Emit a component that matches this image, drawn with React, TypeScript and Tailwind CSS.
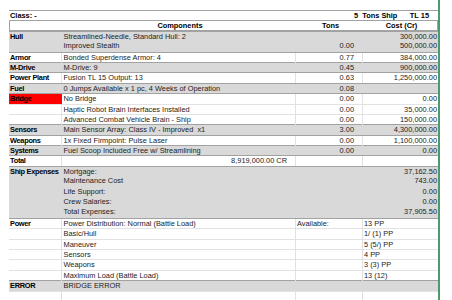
import React from "react";
import clsx from "clsx";

type Row = {
    label?: string;
    text?: string;
    tons?: string;
    cost?: string;
    avail?: string;
    pp?: string;
    total?: string;
    gray?: boolean;
    top?: boolean;
    red?: boolean;
};

const rows: Row[] = [
    { label: "Hull", text: "Streamlined-Needle, Standard Hull: 2", cost: "300,000.00", gray: true, top: true },
    { text: "Improved Stealth", tons: "0.00", cost: "500,000.00", gray: true },
    { label: "Armor", text: "Bonded Superdense Armor: 4", tons: "0.77", cost: "384,000.00", top: true },
    { label: "M-Drive", text: "M-Drive: 9", tons: "0.45", cost: "900,000.00", gray: true, top: true },
    { label: "Power Plant", text: "Fusion TL 15 Output: 13", tons: "0.63", cost: "1,250,000.00", top: true },
    { label: "Fuel", text: "0 Jumps Available x 1 pc, 4 Weeks of Operation", tons: "0.08", gray: true, top: true },
    { label: "Bridge", text: "No Bridge", tons: "0.00", cost: "0.00", red: true, top: true },
    { text: "Haptic Robot Brain Interfaces Installed", tons: "0.00", cost: "35,000.00" },
    { text: "Advanced Combat Vehicle Brain - Ship", tons: "0.00", cost: "150,000.00" },
    { label: "Sensors", text: "Main Sensor Array: Class IV - Improved  x1", tons: "3.00", cost: "4,300,000.00", gray: true, top: true },
    { label: "Weapons", text: "1x Fixed Firmpoint: Pulse Laser", tons: "0.00", cost: "1,100,000.00", top: true },
    { label: "Systems", text: "Fuel Scoop Included Free w/ Streamlining", tons: "0.00", cost: "0.00", gray: true, top: true },
    { label: "Total", total: "8,919,000.00 CR", top: true },
    { label: "Ship Expenses", text: "Mortgage:", cost: "37,162.50", gray: true, top: true },
    { text: "Maintenance Cost", cost: "743.00", gray: true },
    { text: "Life Support:", cost: "0.00", gray: true },
    { text: "Crew Salaries:", cost: "0.00", gray: true },
    { text: "Total Expenses:", cost: "37,905.50", gray: true },
    { label: "Power", text: "Power Distribution: Normal (Battle Load)", avail: "Available:", pp: "13 PP", top: true },
    { text: "Basic/Hull", pp: "1/ (1) PP" },
    { text: "Maneuver", pp: "5 (5/) PP" },
    { text: "Sensors", pp: "4 PP" },
    { text: "Weapons", pp: "3 (3) PP" },
    { text: "Maximum Load (Battle Load)", pp: "13 (12)" },
    { label: "ERROR", text: "BRIDGE ERROR", gray: true, top: true },
];

const grid = "grid grid-cols-[53px_234px_67px_75px] h-[10.4px] leading-[10px] whitespace-pre";

function SheetRow({ r }: { r: Row }) {
    const line = r.gray ? "border-transparent" : "border-[#e2e2e2]";
    return (
        <div
            className={clsx(
                grid,
                r.gray ? "bg-[#d9d9d9]" : "bg-white",
                r.top ? "border-t border-[#a2a2a2]" : r.gray ? "" : "border-t border-[#e2e2e2]"
            )}
        >
            <div
                className={clsx(
                    "pl-[1px] font-bold text-black tracking-[-0.3px] overflow-hidden border-r",
                    r.red ? "bg-[#ff0000] border-[#ff0000]" : line
                )}
            >
                {r.label}
            </div>
            <div className={clsx("pl-[1.5px] border-r", line, r.total && "text-right pr-[8px]")}>
                {r.total ?? r.text}
            </div>
            <div className={clsx("border-r", line, r.avail ? "pl-[1px]" : "text-right pr-[8px]")}>
                {r.avail ?? r.tons}
            </div>
            <div className={clsx(r.pp ? "pl-[1px]" : "text-right pr-[1px]")}>{r.pp ?? r.cost}</div>
        </div>
    );
}

export default function App() {
    return (
        <div className="w-[452px] h-[300px] bg-white overflow-hidden font-['Liberation_Sans',Arial,sans-serif] text-[7.4px] text-[#222]">
            <div className="ml-[9px] w-[431px] h-full pt-[10px] border-r-2 border-[#4b9b6b]">
                <div className={clsx(grid, "border-t border-[#a2a2a2] font-bold text-black")}>
                    <div className="col-span-2 pl-[1px]">Class: -</div>
                    <div className="col-span-2 flex justify-between pl-[58px] pr-[9px]">
                        <span>5  Tons Ship</span>
                        <span>TL 15</span>
                    </div>
                </div>
                <div className={clsx(grid, "border border-[#a2a2a2] font-bold text-black")}>
                    <div />
                    <div className="text-center">Components</div>
                    <div className="text-center">Tons</div>
                    <div className="text-center">Cost (Cr)</div>
                </div>
                {rows.map((r, i) => (
                    <SheetRow key={i} r={r} />
                ))}
                <div className={clsx(grid, "border-t border-[#e2e2e2]")}>
                    <div className="border-r border-[#e2e2e2]" />
                    <div className="border-r border-[#e2e2e2]" />
                    <div className="border-r border-[#e2e2e2]" />
                    <div />
                </div>
            </div>
        </div>
    );
}
